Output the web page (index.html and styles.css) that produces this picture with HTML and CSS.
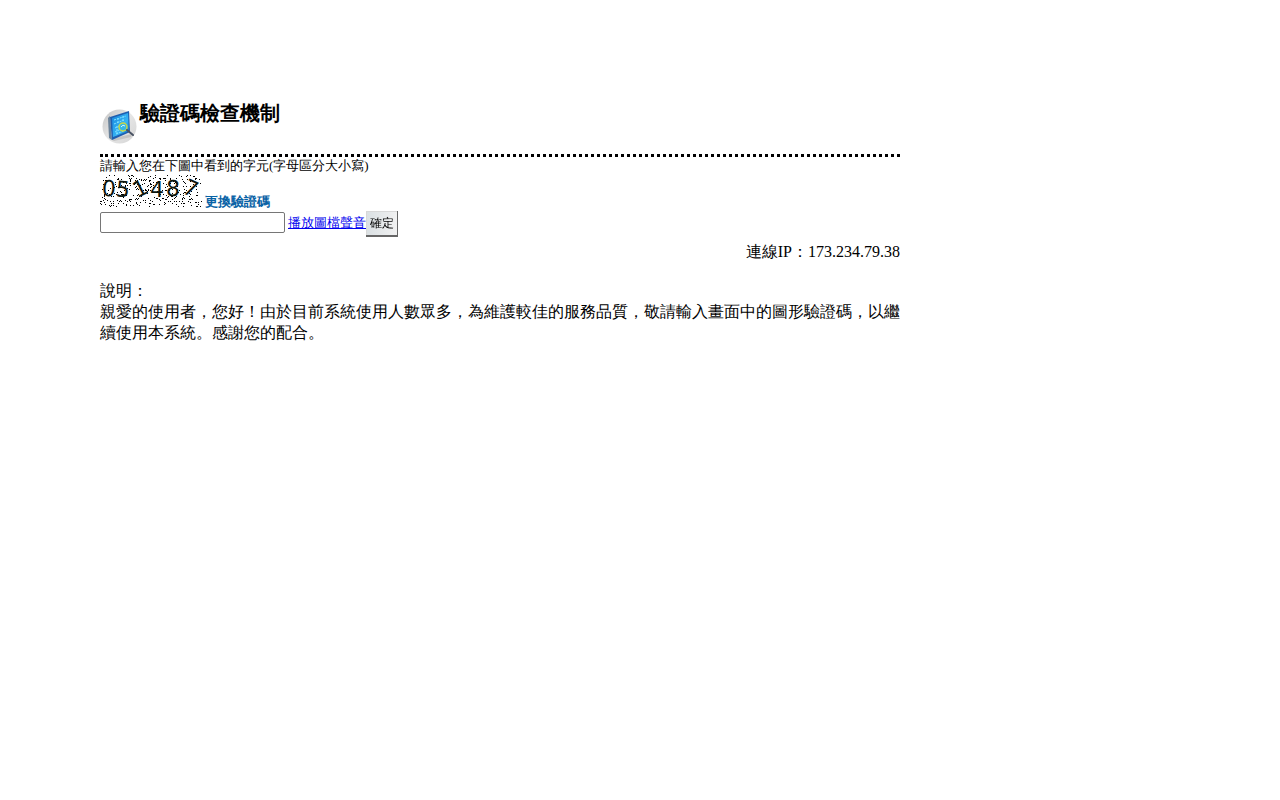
FILE: index.html
```
<!DOCTYPE html>
<html lang="zh-Hant">
<head>
<meta charset="utf-8">
<title>驗證碼檢查機制</title>
<link rel="stylesheet" href="styles.css">
</head>
<body>
<main class="page">
  <header class="header">
    <svg class="logo" viewBox="0 0 40 40" aria-hidden="true">
      <defs>
        <linearGradient id="disc" x1="0" y1="0" x2="1" y2="1"><stop offset="0" stop-color="#c4c4c4"/><stop offset=".5" stop-color="#e6e6e6"/><stop offset="1" stop-color="#d4d4d4"/></linearGradient>
        <linearGradient id="panel" x1="0" y1="0" x2="1" y2="1"><stop offset="0" stop-color="#1685dc"/><stop offset=".6" stop-color="#36b5f5"/><stop offset="1" stop-color="#0867bd"/></linearGradient>
      </defs>
      <circle cx="19.500" cy="20.500" r="17" fill="url(#disc)"/>
      <path d="M10 33L32 28L31 31L14 35Z" fill="#aaa" opacity=".5"/>
      <path d="M8 12L10 10L12 34L9 32Z" fill="#6a8299"/>
      <path d="M10 11L29 5L30 26L12 34Z" fill="#1f5fb0"/>
      <path d="M12 12L28 7L29 25L13 31Z" fill="url(#panel)"/>
      <path d="M14 14L26 10M14 18L24 14M15 22L19 20M15 26L19 24M16 28L24 25M18 12V18M23 10V16M17 20V28" stroke="#82e2ff" stroke-width="1" stroke-dasharray="2 1" fill="none"/>
      <circle cx="23" cy="21" r="4" fill="#35b7e8" stroke="#c8d647" stroke-width="1.500"/>
      <path d="M21 21Q23 18 25 20" stroke="#d5f8ff" fill="none"/>
      <path d="M27 24L33 29" stroke="#4a5364" stroke-width="2" stroke-linecap="round"/>
    </svg>
    <h1 class="title">驗證碼檢查機制</h1>
  </header>
  <form class="form">
    <label class="prompt" for="code">請輸入您在下圖中看到的字元(字母區分大小寫)</label>
    <div class="captcha-row">
      <svg class="captcha" viewBox="0 0 102 32" role="img" aria-label="驗證碼">
        <g id="noise" fill="#000"></g>
        <g class="digits">
          <text x="2" y="21" transform="rotate(3 8 13)">0</text>
          <text x="16" y="22" transform="rotate(5 23 14)">5</text>
          <text x="33" y="21" transform="rotate(-26 40 13)">1</text>
          <text x="50" y="22">4</text>
          <text x="66" y="21" transform="rotate(2 73 13)">8</text>
          <text x="84" y="21" transform="rotate(24 91 13)">7</text>
        </g>
      </svg>
      <a class="refresh" href="#">更換驗證碼</a>
    </div>
    <div class="entry-row">
      <input class="code" id="code" type="text">
      <a class="audio" href="#">播放圖檔聲音</a>
      <button class="submit" type="submit">確定</button>
    </div>
  </form>
  <p class="ip">連線IP：173.234.79.38</p>
  <section class="notes">
    <p>說明：</p>
    <p>親愛的使用者，您好！由於目前系統使用人數眾多，為維護較佳的服務品質，敬請輸入畫面中的圖形驗證碼，以繼續使用本系統。感謝您的配合。</p>
  </section>
</main>
<script src="noise.js"></script>
</body>
</html>
```
FILE: styles.css
```
body {
  margin: 0;
  background: #fff;
  color: #000;
  font-family: "Liberation Serif", serif;
  font-size: 16px;
  line-height: 21px;
}
.page {
  max-width: 800px;
  margin: 100px;
}
.header {
  display: flex;
  align-items: flex-start;
  padding-bottom: 8px;
  border-bottom: 3px dotted #000;
}
.logo {
  width: 40px;
  height: 40px;
  margin-top: 6px;
}
.title {
  margin: 0;
  font-size: 20px;
  line-height: 26px;
}
.form {
  font-size: 13px;
}
.prompt {
  display: block;
  line-height: 18px;
}
.captcha-row {
  display: flex;
  align-items: flex-end;
  gap: 3px;
}
.captcha {
  width: 102px;
  height: 32px;
  margin-bottom: 4px;
  overflow: visible;
}
.digits {
  font-family: "DejaVu Sans", sans-serif;
  font-size: 22px;
  fill: #0c160e;
}
.refresh {
  color: #0862a5;
  font-weight: bold;
  line-height: 19px;
  text-decoration: none;
}
.entry-row {
  display: flex;
  align-items: flex-start;
}
.code {
  box-sizing: border-box;
  width: 185px;
  height: 21px;
  margin: 1px 3px 0 0;
  padding: 1px 2px;
  border: 1px solid #767676;
  border-radius: 2px;
}
.audio {
  color: #0000ee;
  line-height: 23px;
}
.submit {
  box-sizing: border-box;
  height: 26px;
  padding: 0 3px 0 4px;
  border: solid #666;
  border-width: 0 1px 2px 0;
  background: linear-gradient(to right, #dae0e3, #f1f1f1);
  color: #000;
  font-family: "Liberation Sans", "WenQuanYi Zen Hei", "Noto Sans CJK TC", sans-serif;
  font-size: 12px;
  box-shadow: inset 1px 1px #d8d8d8;
}
.ip {
  margin: 4px 0 18px;
  text-align: right;
}
.notes p {
  margin: 0;
}
```
FILE: noise.js
```
const noise = document.getElementById("noise");
let seed = 48271;
function next(limit) {
  seed = (seed * 48271) % 2147483647;
  return seed % limit;
}
for (let i = 0; i < 330; i++) {
  const dot = document.createElementNS("http://www.w3.org/2000/svg", "rect");
  dot.setAttribute("x", next(102));
  dot.setAttribute("y", next(32));
  dot.setAttribute("width", 1);
  dot.setAttribute("height", 1);
  noise.appendChild(dot);
}
```
